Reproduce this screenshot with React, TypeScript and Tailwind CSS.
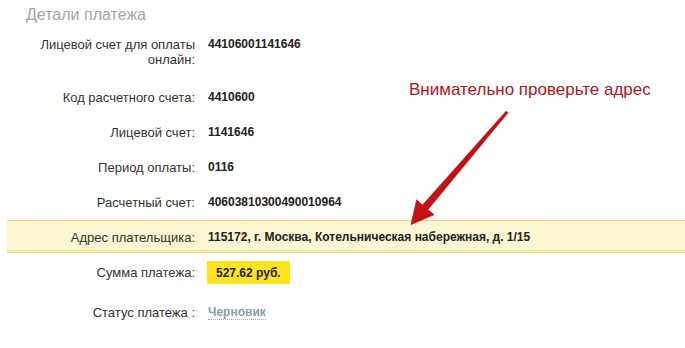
const rows: { label: string[]; value: string }[] = [
  { label: ["Лицевой счет для оплаты", "онлайн:"], value: "44106001141646" },
  { label: ["Код расчетного счета:"], value: "4410600" },
  { label: ["Лицевой счет:"], value: "1141646" },
  { label: ["Период оплаты:"], value: "0116" },
  { label: ["Расчетный счет:"], value: "40603810300490010964" },
]

function Row({ label, children, className }: { label: string[]; children: React.ReactNode; className?: string }) {
  return (
    <div className={"flex items-start " + (className ?? "py-[10px]")}>
      <div className="w-[195px] shrink-0 text-right text-[13px] leading-[15px] text-[#333]">
        {label.map((l) => (
          <div key={l}>{l}</div>
        ))}
      </div>
      <div className="pl-[13px] text-[12px] leading-[15px] font-bold text-[#222]">{children}</div>
    </div>
  )
}

function Arrow() {
  return (
    <svg className="absolute left-0 top-0 pointer-events-none" width="685" height="348">
      <defs>
        <linearGradient id="ar" x1="0" y1="0" x2="1" y2="1">
          <stop offset="0" stopColor="#d4141a" />
          <stop offset="1" stopColor="#b30d0d" />
        </linearGradient>
      </defs>
      <polygon
        points="508,112.8 506,111.2 422.6,205 416.6,199.8 411,224.5 434,214.8 428,209.6"
        fill="url(#ar)"
        stroke="#a80a0a"
        strokeWidth="0.6"
        strokeLinejoin="round"
      />
    </svg>
  )
}

export default function App() {
  return (
    <div className="relative w-[685px] h-[348px] bg-white overflow-hidden font-['Liberation_Sans',Arial,sans-serif]">
      <div className="pl-[26px] pt-[5px] text-[16px] leading-[20px] text-[#a5a5a5]">Детали платежа</div>
      <div className="mt-[2px]">
        {rows.map((r, i) => (
          <Row key={r.value} label={r.label} className={i === 0 ? "pt-[10px] pb-[13px]" : undefined}>
            {r.value}
          </Row>
        ))}
        <div className="ml-[7px] border-double border-t border-b-[3px] border-[#efd67a] bg-[#fdf6d2]">
          <div className="-ml-[7px]">
            <Row label={["Адрес плательщика:"]} className="pt-[9px] pb-[5px]">
              115172, г. Москва, Котельническая набережная, д. 1/15
            </Row>
          </div>
        </div>
        <div className="flex items-center pt-[8px] pb-[11px]">
          <div className="w-[195px] shrink-0 text-right text-[13px] leading-[15px] text-[#333]">Сумма платежа:</div>
          <div className="ml-[12px] px-[9px] h-[23px] flex items-center bg-[#fde41c] text-[12px] font-bold text-[#222]">
            527.62 руб.
          </div>
        </div>
        <Row label={["Статус платежа :"]}>
          <span className="text-[#8a9ea8] border-b border-dotted border-[#9aaab2]">Черновик</span>
        </Row>
      </div>
      <div className="absolute left-[409px] top-[79px] text-[17px] leading-[22px] text-[#b3141b]">
        Внимательно проверьте адрес
      </div>
      <Arrow />
    </div>
  )
}
